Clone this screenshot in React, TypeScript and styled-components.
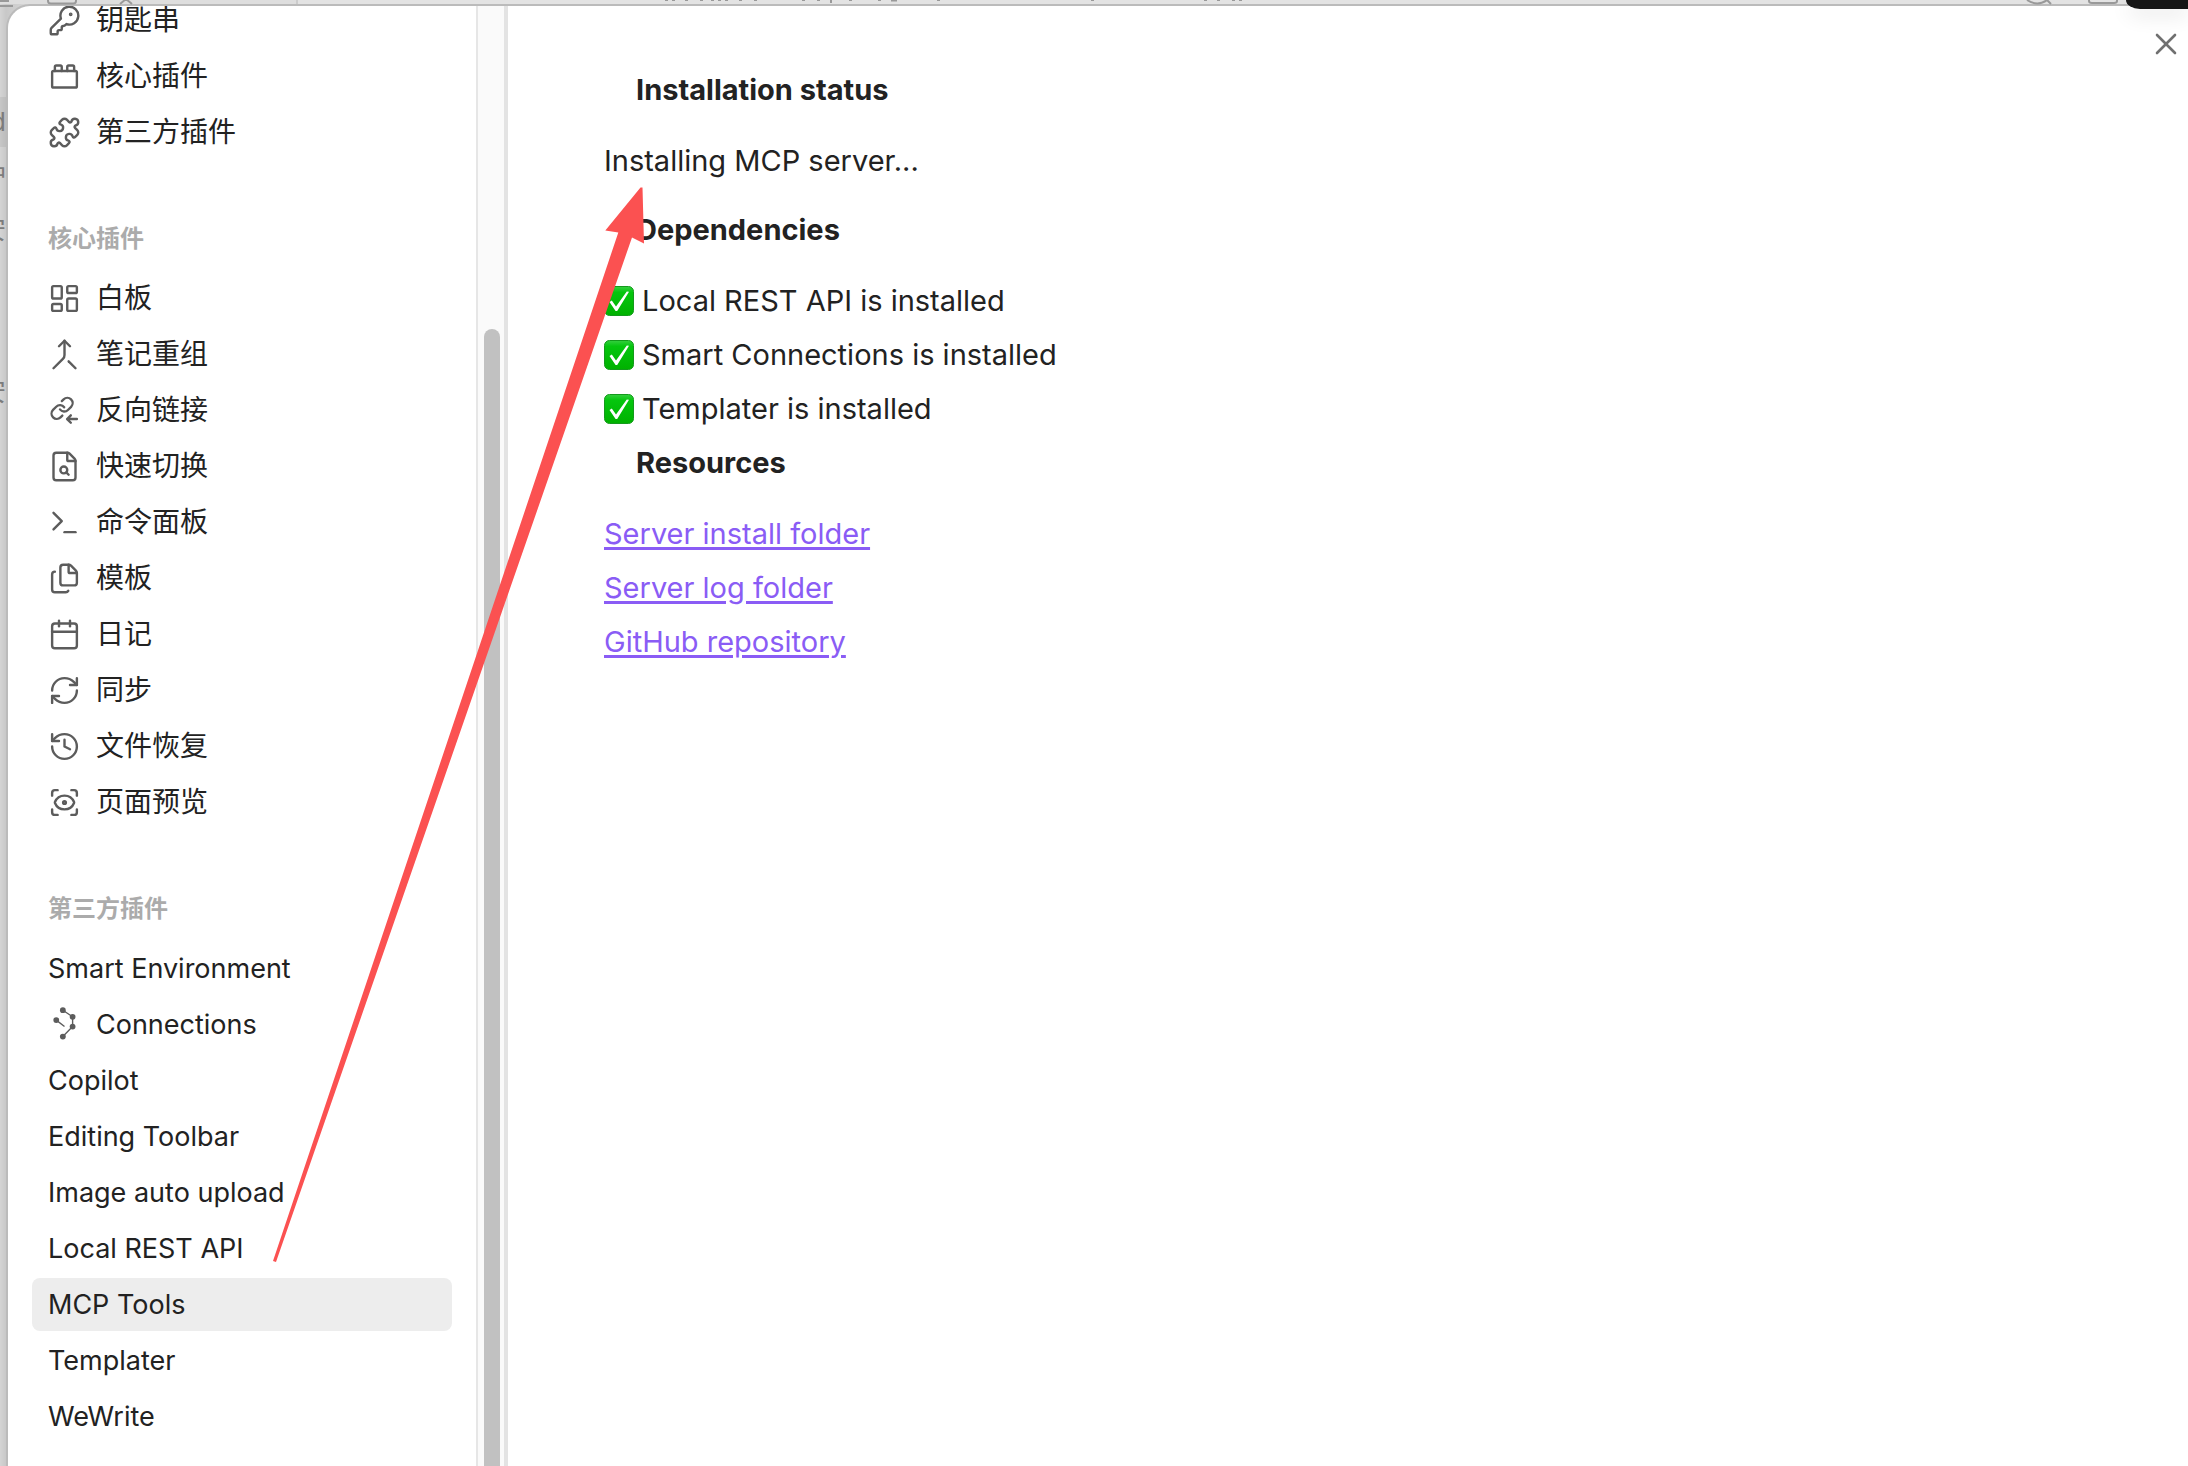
import React from 'react';
import styled, { createGlobalStyle } from 'styled-components';
import {
  KeyRound, ToyBrick, Puzzle, LayoutDashboard, Merge, Terminal, Files, Calendar, RefreshCw, History, ScanEye, X,
} from 'lucide-react';

const Global = createGlobalStyle`
  *, *::before, *::after { box-sizing: border-box; }
  html, body, #root { height: 100%; }
  body {
    margin: 0;
    overflow: hidden;
    background: #d2d2d2;
    color: #222222;
    font-family: Inter, "Noto Sans CJK SC", sans-serif;
  }
`;

const Workspace = styled.div`
  position: relative;
  height: 100%;
  display: flex;
  flex-direction: column;
  background: linear-gradient(to right, #d4d4d4, #c8c8c8 6px, #d8d8d8 30px);
`;

const TopStrip = styled.div`
  position: relative;
  height: 4px;
  flex: none;
  display: flex;
  background: #e3e3e3;
`;

const TopStripLeft = styled.div`
  width: 298px;
  border-right: 2px solid #cccccc;
  background: #dedede;
`;

const StripMarks = styled.svg`
  position: absolute;
  left: 0;
  top: 0;
`;

const Body = styled.div`
  flex: 1;
  min-height: 0;
  display: flex;
`;

const FileEdge = styled.div`
  flex: none;
  width: 6px;
  padding-top: 93px;
  overflow: hidden;
  color: #7c7c7c;
  font-size: 26px;
  line-height: 50px;
`;

const FileRow = styled.div<{ $active?: boolean; $gap?: number }>`
  display: flex;
  justify-content: flex-end;
  height: 50px;
  margin-bottom: ${(p) => p.$gap ?? 4}px;
  background: ${(p) => (p.$active ? 'rgba(0, 0, 0, 0.06)' : 'transparent')};
`;

const Modal = styled.main`
  flex: 1;
  min-width: 0;
  display: flex;
  overflow: hidden;
  background: #ffffff;
  border: solid #bbbbbb;
  border-width: 2px 0 0 2px;
  border-top-left-radius: 24px;
`;

const Sidebar = styled.nav`
  flex: none;
  width: 468px;
  padding: 0 24px;
`;

const SidebarList = styled.div`
  margin-top: -12px;
`;

const GroupTitle = styled.h2`
  margin: 64px 0 17px;
  padding: 0 16px;
  font-size: 24px;
  line-height: 32px;
  font-weight: 700;
  color: #ababab;
`;

const Group = styled.div`
  display: flex;
  flex-direction: column;
  gap: 3px;
`;

const Item = styled.button<{ $active?: boolean }>`
  display: flex;
  align-items: center;
  gap: 15px;
  width: 100%;
  padding: 8px 16px;
  border: 0;
  border-radius: 8px;
  background: ${(p) => (p.$active ? '#ededed' : 'transparent')};
  color: inherit;
  font: inherit;
  font-size: 28px;
  line-height: 37px;
  text-align: left;
  white-space: nowrap;
`;

const LatinLabel = styled.span`
  font-size: 27px;
`;

const IconBox = styled.span`
  display: flex;
  flex: none;
  color: #5c5c5c;

  svg {
    width: 33px;
    height: 33px;
    stroke-width: 1.75;
  }
`;

const ScrollTrack = styled.div`
  flex: none;
  width: 32px;
  padding: 323px 4px 0 6px;
  display: flex;
  background: #fafafa;
  border: solid #e6e6e6;
  border-width: 0 4px 0 2px;
  border-right-color: #e3e3e3;
`;

const ScrollThumb = styled.div`
  flex: 1;
  background: #c1c1c1;
  border-radius: 8px 8px 0 0;
`;

const Content = styled.section`
  flex: 1;
  min-width: 0;
  padding: 57px 96px;
  font-size: 29px;
  line-height: 54px;
`;

const Heading = styled.h3`
  margin: 0 0 17px;
  padding-left: 32px;
  font-size: 29px;
  line-height: 54px;
  font-weight: 700;
`;

const Status = styled.p`
  margin: 0 0 15px;
`;

const PlainList = styled.ul`
  margin: 0;
  padding: 0;
  list-style: none;
`;

const Dependency = styled.li`
  display: flex;
  align-items: center;
  gap: 8px;
`;

const Link = styled.a`
  color: #8a5cf5;
  text-decoration: underline;
  text-decoration-thickness: 3px;
  text-underline-offset: 3px;
`;

const CloseButton = styled.button`
  position: absolute;
  top: 26px;
  right: 4px;
  display: flex;
  padding: 0;
  border: 0;
  background: none;
  color: #707070;
`;

const CornerTab = styled.div`
  position: absolute;
  top: 0;
  right: 0;
  width: 62px;
  height: 9px;
  background: #161616;
  border-bottom-left-radius: 14px 9px;
  box-shadow: 0 6px 20px rgba(0, 0, 0, 0.12);
`;

const Arrow = styled.svg`
  position: absolute;
  left: 273px;
  top: 187px;
  pointer-events: none;
`;

const stroke = { fill: 'none', stroke: 'currentColor', strokeLinecap: 'round', strokeLinejoin: 'round' } as const;

const FileFind = () => (
  <svg viewBox="0 0 24 24" {...stroke}>
    <path d="M6 22a2 2 0 0 1-2-2V4a2 2 0 0 1 2-2h8a2.4 2.4 0 0 1 1.704.706l3.588 3.588A2.4 2.4 0 0 1 20 8v12a2 2 0 0 1-2 2z" />
    <path d="M14 2v5a1 1 0 0 0 1 1h5" />
    <circle cx="11.5" cy="14.5" r="2.5" />
    <path d="M13.3 16.3 15 18" />
  </svg>
);

const Backlink = () => (
  <svg viewBox="0 0 24 24" {...stroke}>
    <g transform="translate(1 1.2) scale(0.77)" strokeWidth="2.2">
      <path d="M10 13a5 5 0 0 0 7.54.54l3-3a5 5 0 0 0-7.07-7.07l-1.72 1.71" />
      <path d="M14 11a5 5 0 0 0-7.54-.54l-3 3a5 5 0 0 0 7.07 7.07l1.71-1.71" />
    </g>
    <path d="M21 18.200H14M16.600 15.500 13.900 18.200l2.700 2.700" />
  </svg>
);

const Graph = () => (
  <svg viewBox="0 0 24 24" fill="currentColor" stroke="none" overflow="visible">
    <path d="M10.800 1.600 17.900 6.400V13.500L10.800 20.800M6 8.800l6 4.600" fill="none" stroke="currentColor" style={{ strokeWidth: 1 }} />
    <circle cx="10.8" cy="1.6" r="2.1" />
    <circle cx="17.9" cy="6.4" r="2.1" />
    <circle cx="6" cy="8.8" r="2.1" />
    <circle cx="17.9" cy="13.5" r="2.1" />
    <circle cx="10.8" cy="20.8" r="2.1" />
  </svg>
);

const CheckMark = () => (
  <svg width="30" height="30" viewBox="0 0 30 30" role="img" aria-label="Installed">
    <defs>
      <linearGradient id="tick" x1="0" y1="0" x2="0" y2="1">
        <stop offset="0" stopColor="#35cf40" />
        <stop offset="0.2" stopColor="#05c60e" />
        <stop offset="1" stopColor="#00b100" />
      </linearGradient>
    </defs>
    <rect x="0.5" y="0.5" width="29" height="29" rx="5" fill="url(#tick)" stroke="#149a1c" />
    <path d="M5.500 16 7.800 14.600l4.200 6L22.800 5.500 25 5.800 13.200 25h-1.600z" fill="#fff" />
  </svg>
);

const tabMarks = [665, 672, 685, 700, 711, 718, 725, 739, 754, 802, 817, 849, 878, 937, 1091, 1204, 1217, 1232, 1239];

const ToolbarMarks = () => (
  <StripMarks width="2124" height="8" viewBox="0 0 2124 8" fill="none" stroke="#999999" strokeWidth="2" aria-hidden="true">
    <path d="M0 6H13M0 1H9" />
    <path d="M48 0v1q0 2.500 3 2.500h22q3 0 3-2.500V0" />
    <path d="M120 4l6-5 6 5" />
    <path d="M2027 0q11 7 20 0l4 4" />
    <path d="M2089 0v1q0 2 3 2h22q3 0 3-2V0" />
    <path d="M831 0v3M891 0.500h6" />
    {tabMarks.map((x) => (
      <path key={x} d={`M${x} 0.500h3`} strokeWidth="1" />
    ))}
  </StripMarks>
);

type Entry = { label: string; icon?: React.ReactNode; latin?: boolean; active?: boolean };

const options: Entry[] = [
  { label: '钥匙串', icon: <KeyRound /> },
  { label: '核心插件', icon: <ToyBrick /> },
  { label: '第三方插件', icon: <Puzzle /> },
];

const core: Entry[] = [
  { label: '白板', icon: <LayoutDashboard /> },
  { label: '笔记重组', icon: <Merge /> },
  { label: '反向链接', icon: <Backlink /> },
  { label: '快速切换', icon: <FileFind /> },
  { label: '命令面板', icon: <Terminal /> },
  { label: '模板', icon: <Files /> },
  { label: '日记', icon: <Calendar /> },
  { label: '同步', icon: <RefreshCw /> },
  { label: '文件恢复', icon: <History /> },
  { label: '页面预览', icon: <ScanEye /> },
];

const community: Entry[] = [
  { label: 'Smart Environment', latin: true },
  { label: 'Connections', latin: true, icon: <Graph /> },
  { label: 'Copilot', latin: true },
  { label: 'Editing Toolbar', latin: true },
  { label: 'Image auto upload', latin: true },
  { label: 'Local REST API', latin: true },
  { label: 'MCP Tools', latin: true, active: true },
  { label: 'Templater', latin: true },
  { label: 'WeWrite', latin: true },
];

const Entries = ({ list }: { list: Entry[] }) => (
  <Group>
    {list.map((e) => (
      <Item key={e.label} type="button" $active={e.active}>
        {e.icon && <IconBox>{e.icon}</IconBox>}
        {e.latin ? <LatinLabel>{e.label}</LatinLabel> : <span>{e.label}</span>}
      </Item>
    ))}
  </Group>
);

export default function App() {
  return (
    <>
      <Global />
      <Workspace>
        <TopStrip>
          <TopStripLeft />
          <ToolbarMarks />
        </TopStrip>
        <Body>
          <FileEdge aria-hidden="true">
            <FileRow $active>d</FileRow>
            <FileRow>护</FileRow>
            <FileRow $gap={112}>安</FileRow>
            <FileRow>安</FileRow>
          </FileEdge>
          <Modal>
            <Sidebar>
              <SidebarList>
                <Entries list={options} />
                <GroupTitle>核心插件</GroupTitle>
                <Entries list={core} />
                <GroupTitle>第三方插件</GroupTitle>
                <Entries list={community} />
              </SidebarList>
            </Sidebar>
            <ScrollTrack>
              <ScrollThumb />
            </ScrollTrack>
            <Content>
              <Heading>Installation status</Heading>
              <Status>Installing MCP server...</Status>
              <Heading>Dependencies</Heading>
              <PlainList>
                {['Local REST API', 'Smart Connections', 'Templater'].map((name) => (
                  <Dependency key={name}>
                    <CheckMark />
                    <span>{name} is installed</span>
                  </Dependency>
                ))}
              </PlainList>
              <Heading>Resources</Heading>
              <PlainList>
                {['Server install folder', 'Server log folder', 'GitHub repository'].map((name) => (
                  <li key={name}>
                    <Link href="#">{name}</Link>
                  </li>
                ))}
              </PlainList>
            </Content>
          </Modal>
        </Body>
        <CloseButton type="button" aria-label="Close">
          <X size={36} strokeWidth={1.75} />
        </CloseButton>
        <CornerTab />
        <Arrow width="372" height="1076" viewBox="273 187 372 1076" aria-hidden="true">
          <path d="M640.500 187.500H642.500L644 243.500 632 237.500 276 1262 273 1261 618.300 232.500 605.300 230.500Z" fill="#fb5151" />
        </Arrow>
      </Workspace>
    </>
  );
}
